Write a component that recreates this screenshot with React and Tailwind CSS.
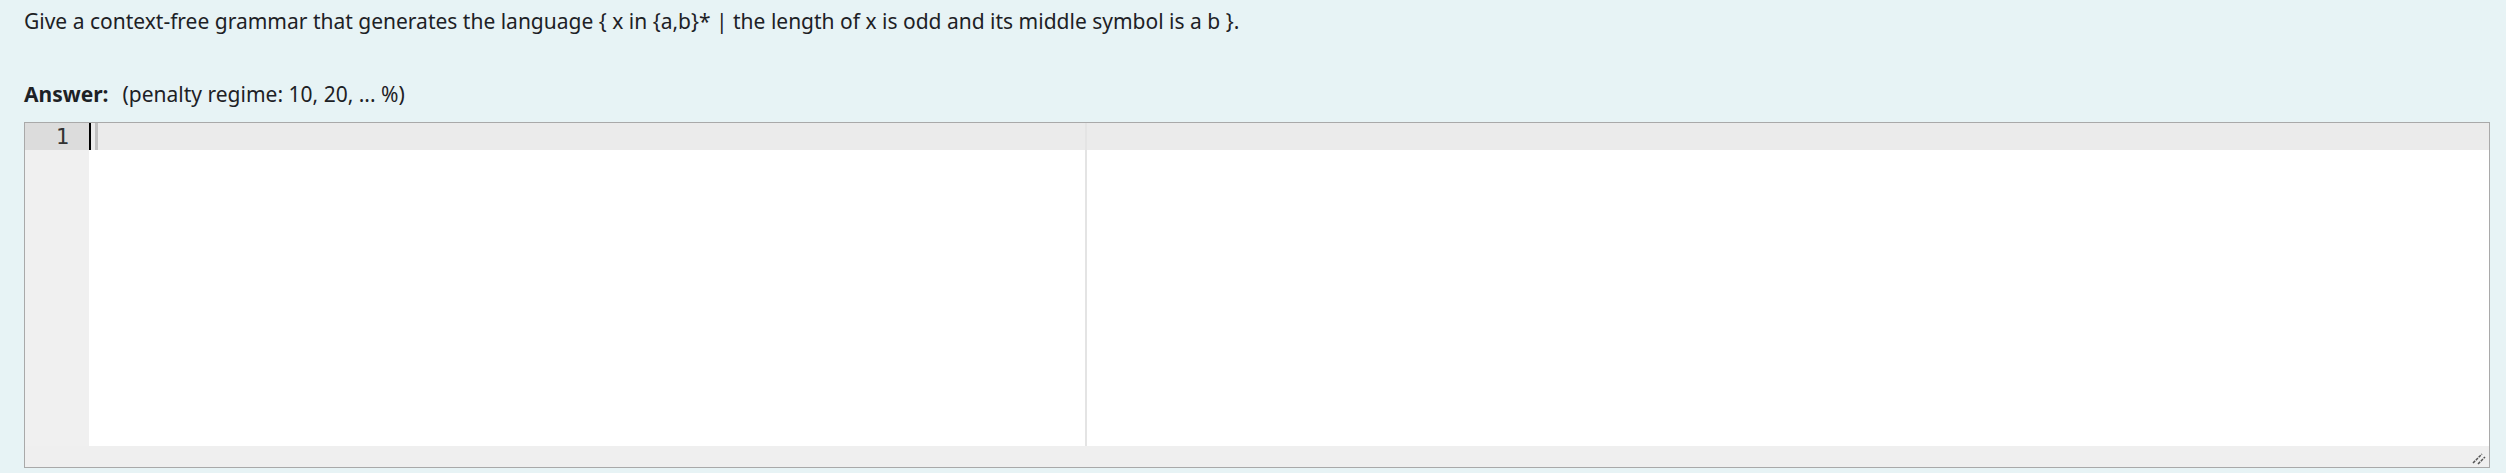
export default function App() {
  return (
    <div
      className="min-h-screen bg-[#e7f3f5] text-[#1d2125] pt-[6px]"
      style={{ fontFamily: '"Noto Sans", "Open Sans", sans-serif' }}
    >
      <div className="pl-[24px] text-[21px] leading-[30px]">
        Give a context-free grammar that generates the language {"{"} x in {"{a,b}"}* | the length of x is odd and its middle symbol is a b {"}"}.
      </div>
      <div className="pl-[24px] mt-[43px] text-[21px] leading-[30px] flex gap-[14px]">
        <span className="font-bold">Answer:</span>
        <span>(penalty regime: 10, 20, ... %)</span>
      </div>
      <div className="ml-[24px] mt-[13px] w-[2466px] h-[346px] border border-[#a9a9a9] flex flex-col">
        <div className="flex flex-1">
          <div
            className="w-[64px] bg-[#f0f0f0] text-[#333] text-[22px]"
            style={{ fontFamily: '"DejaVu Sans Mono", "Liberation Mono", monospace' }}
          >
            <div className="h-[27px] leading-[27px] bg-[#dcdcdc] text-right pr-[20px]">1</div>
          </div>
          <div className="flex-1 flex flex-col relative">
            <div className="h-[27px] bg-[#ebebeb] flex">
              <div className="w-[2px] bg-black" />
              <div className="w-[4px]" />
              <div className="w-[3px] bg-[#c0c0c0]" />
            </div>
            <div className="flex-1 bg-white" />
            <div className="absolute left-[996px] top-0 bottom-0 w-[2px] bg-[#e4e4e4]" />
          </div>
        </div>
        <div className="h-[21px] bg-[#efefef] relative">
          <svg
            className="absolute right-[2px] bottom-[2px]"
            width="16"
            height="16"
            viewBox="0 0 16 16"
          >
            <line x1="2" y1="14" x2="11" y2="5" stroke="#555" strokeWidth="1.5" strokeDasharray="3 1" />
            <line x1="7" y1="15" x2="14" y2="8" stroke="#555" strokeWidth="1.5" strokeDasharray="3 1" />
          </svg>
        </div>
      </div>
    </div>
  );
}
